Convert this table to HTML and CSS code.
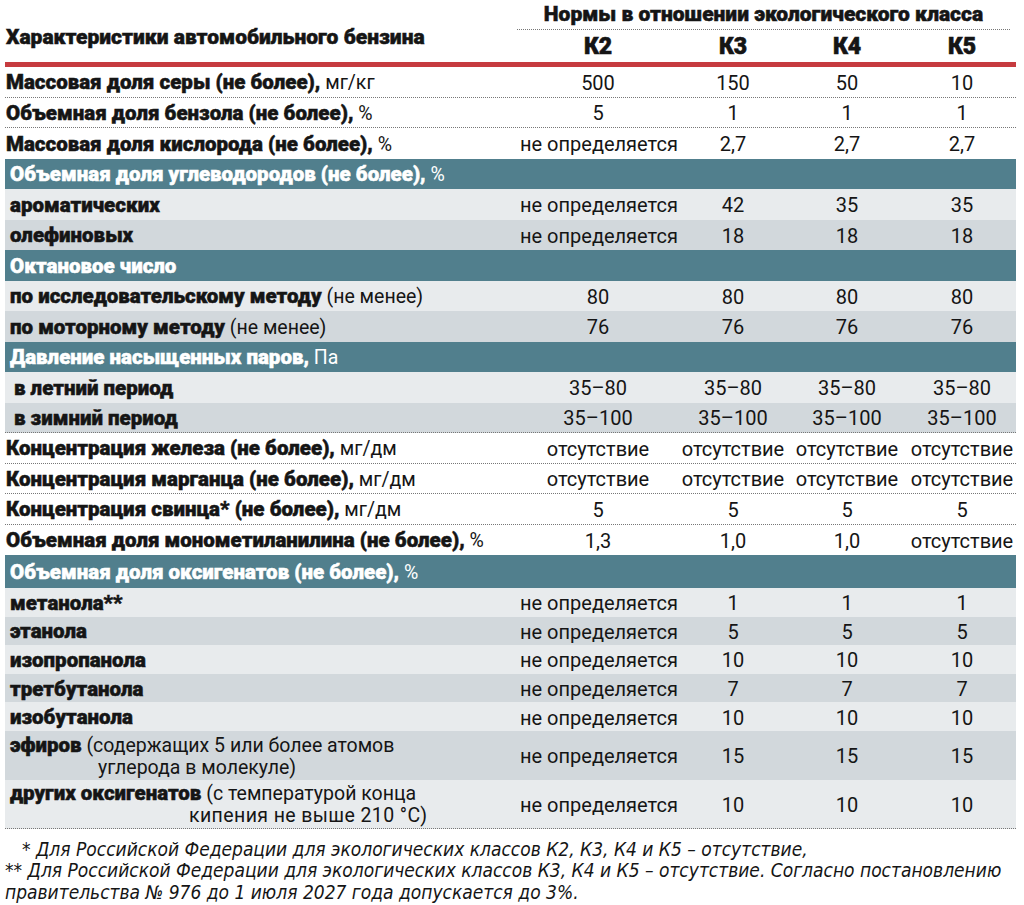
FILE: index.html
```html
<!DOCTYPE html>
<html lang="ru">
<head>
    <meta charset="UTF-8">
    <meta name="viewport" content="width=device-width, initial-scale=1.0">
    <title>Характеристики автомобильного бензина</title>
    <link rel="stylesheet" href="styles.css">
</head>
<body>
    <div class="chart">
        <div class="grid head">
            <div class="head-title">Характеристики автомобильного бензина</div>
            <div class="norms">Нормы в отношении экологического класса</div>
            <div class="cls">К2</div>
            <div class="cls">К3</div>
            <div class="cls">К4</div>
            <div class="cls">К5</div>
        </div>
        <div class="rule"></div>

        <div class="grid row dot">
            <div class="lbl"><b>Массовая доля серы (не более),</b> мг/кг</div>
            <div class="v">500</div><div class="v">150</div><div class="v">50</div><div class="v">10</div>
        </div>
        <div class="grid row dot">
            <div class="lbl"><b>Объемная доля бензола (не более),</b> %</div>
            <div class="v">5</div><div class="v">1</div><div class="v">1</div><div class="v">1</div>
        </div>
        <div class="grid row">
            <div class="lbl"><b>Массовая доля кислорода (не более),</b> %</div>
            <div class="v nd">не определяется</div><div class="v">2,7</div><div class="v">2,7</div><div class="v">2,7</div>
        </div>

        <div class="grid row sec">
            <div class="lbl"><b>Объемная доля углеводородов (не более),</b> %</div>
        </div>
        <div class="grid row lt">
            <div class="lbl"><b>ароматических</b></div>
            <div class="v nd">не определяется</div><div class="v">42</div><div class="v">35</div><div class="v">35</div>
        </div>
        <div class="grid row dk">
            <div class="lbl"><b>олефиновых</b></div>
            <div class="v nd">не определяется</div><div class="v">18</div><div class="v">18</div><div class="v">18</div>
        </div>

        <div class="grid row sec">
            <div class="lbl"><b>Октановое число</b></div>
        </div>
        <div class="grid row lt">
            <div class="lbl"><b>по исследовательскому методу</b> (не менее)</div>
            <div class="v">80</div><div class="v">80</div><div class="v">80</div><div class="v">80</div>
        </div>
        <div class="grid row dk">
            <div class="lbl"><b>по моторному методу</b> (не менее)</div>
            <div class="v">76</div><div class="v">76</div><div class="v">76</div><div class="v">76</div>
        </div>

        <div class="grid row sec">
            <div class="lbl"><b>Давление насыщенных паров,</b> Па</div>
        </div>
        <div class="grid row lt">
            <div class="lbl sub"><b>в летний период</b></div>
            <div class="v">35–80</div><div class="v">35–80</div><div class="v">35–80</div><div class="v">35–80</div>
        </div>
        <div class="grid row dk dot">
            <div class="lbl sub"><b>в зимний период</b></div>
            <div class="v">35–100</div><div class="v">35–100</div><div class="v">35–100</div><div class="v">35–100</div>
        </div>

        <div class="grid row dot">
            <div class="lbl"><b>Концентрация железа (не более),</b> мг/дм</div>
            <div class="v">отсутствие</div><div class="v">отсутствие</div><div class="v">отсутствие</div><div class="v">отсутствие</div>
        </div>
        <div class="grid row dot">
            <div class="lbl"><b>Концентрация марганца (не более),</b> мг/дм</div>
            <div class="v">отсутствие</div><div class="v">отсутствие</div><div class="v">отсутствие</div><div class="v">отсутствие</div>
        </div>
        <div class="grid row dot">
            <div class="lbl"><b>Концентрация свинца* (не более),</b> мг/дм</div>
            <div class="v">5</div><div class="v">5</div><div class="v">5</div><div class="v">5</div>
        </div>
        <div class="grid row">
            <div class="lbl"><b>Объемная доля монометиланилина (не более),</b> %</div>
            <div class="v">1,3</div><div class="v">1,0</div><div class="v">1,0</div><div class="v">отсутствие</div>
        </div>

        <div class="grid row sec last">
            <div class="lbl"><b>Объемная доля оксигенатов (не более),</b> %</div>
        </div>
        <div class="grid row ox lt">
            <div class="lbl"><b>метанола**</b></div>
            <div class="v nd">не определяется</div><div class="v">1</div><div class="v">1</div><div class="v">1</div>
        </div>
        <div class="grid row ox dk">
            <div class="lbl"><b>этанола</b></div>
            <div class="v nd">не определяется</div><div class="v">5</div><div class="v">5</div><div class="v">5</div>
        </div>
        <div class="grid row ox lt">
            <div class="lbl"><b>изопропанола</b></div>
            <div class="v nd">не определяется</div><div class="v">10</div><div class="v">10</div><div class="v">10</div>
        </div>
        <div class="grid row ox dk">
            <div class="lbl"><b>третбутанола</b></div>
            <div class="v nd">не определяется</div><div class="v">7</div><div class="v">7</div><div class="v">7</div>
        </div>
        <div class="grid row ox lt">
            <div class="lbl"><b>изобутанола</b></div>
            <div class="v nd">не определяется</div><div class="v">10</div><div class="v">10</div><div class="v">10</div>
        </div>
        <div class="grid row tall dk">
            <div class="lbl"><b>эфиров</b> (содержащих 5 или более атомов<br><span class="cont ester">углерода в молекуле)</span></div>
            <div class="v nd">не определяется</div><div class="v">15</div><div class="v">15</div><div class="v">15</div>
        </div>
        <div class="grid row tall lt dot">
            <div class="lbl"><b>других оксигенатов</b> (с температурой конца<br><span class="cont other">кипения не выше 210 °С)</span></div>
            <div class="v nd">не определяется</div><div class="v">10</div><div class="v">10</div><div class="v">10</div>
        </div>

        <div class="notes">
            <p class="note-one">* Для Российской Федерации для экологических классов К2, К3, К4 и К5 – отсутствие,</p>
            <p>** Для Российской Федерации для экологических классов К3, К4 и К5 – отсутствие. Согласно постановлению<br>правительства № 976 до 1 июля 2027 года допускается до 3%.</p>
        </div>
    </div>
</body>
</html>
```

FILE: styles.css
```css
body {
    margin: 0;
    background-color: #fff;
    font-family: Roboto, 'Liberation Sans', sans-serif;
    color: #151515;
}
.chart {
    width: 1011px;
    margin-left: 5px;
}
.grid {
    display: grid;
    grid-template-columns: 511px 164px 106px 122px 108px;
}
.head {
    height: 62px;
    grid-template-rows: 30px 32px;
}
.head-title {
    grid-row: 1 / 3;
    align-self: start;
    padding-top: 25px;
    padding-left: 1px;
    font-size: 21px;
    font-weight: 900;
    -webkit-text-stroke: 0.5px currentColor;
}
.norms {
    grid-column: 2 / 6;
    border-bottom: 1px dotted #777;
    text-align: center;
    font-size: 21px;
    font-weight: 900;
    line-height: 29px;
    margin-left: 1px;
    margin-right: 6px;
    -webkit-text-stroke: 0.5px currentColor;
}
.cls {
    text-align: center;
    font-size: 23px;
    font-weight: 900;
    line-height: 34px;
    -webkit-text-stroke: 0.6px currentColor;
}
.rule {
    height: 5px;
    background-color: #c63b3f;
}
.row {
    box-sizing: border-box;
    height: 30.5px;
    align-items: center;
}
.row.ox {
    height: 28.6px;
}
.row.tall {
    height: 49px;
}
.row.last {
    height: 33px;
}
.dot {
    border-bottom: 1px dotted #777;
}
.sec {
    background-color: #517f8d;
    color: #fff;
}
.lt {
    background-color: #e8ebed;
}
.dk {
    background-color: #d2d8dc;
}
.lbl {
    padding-left: 1px;
    padding-top: 2px;
    font-size: 19.5px;
    line-height: 22px;
    white-space: nowrap;
}
.lbl b {
    font-size: 20.5px;
    font-weight: 900;
    -webkit-text-stroke: 0.5px currentColor;
}
.sec .lbl, .lt .lbl, .dk .lbl {
    padding-left: 5px;
}
.lbl.sub {
    padding-left: 9px !important;
}
.cont {
    display: inline-block;
}
.cont.ester {
    padding-left: 88px;
}
.cont.other {
    padding-left: 179px;
    letter-spacing: 0.4px;
}
.v {
    text-align: center;
    padding-top: 2px;
    font-size: 20px;
    font-weight: 400;
}
.v.nd {
    text-align: left;
    padding-left: 4px;
}
.notes {
    margin-top: 10px;
    font-family: 'DejaVu Sans Condensed', 'DejaVu Sans', sans-serif;
    font-stretch: condensed;
    font-style: italic;
    font-size: 19px;
    line-height: 21.5px;
}
.notes p {
    margin: 0;
}
.note-one {
    padding-left: 17px;
}
```
